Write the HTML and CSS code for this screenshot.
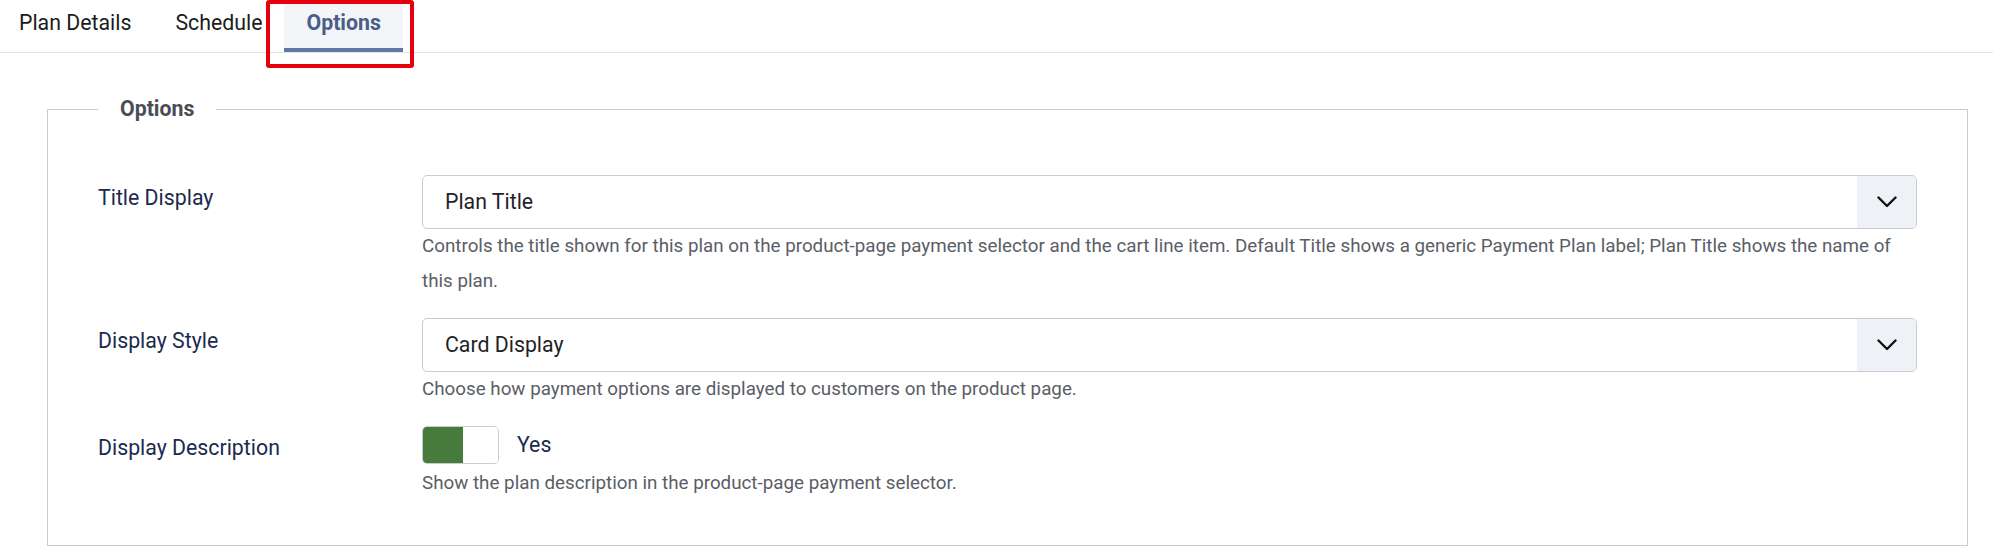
FILE: index.html
```html
<!DOCTYPE html>
<html lang="en">
<head>
<meta charset="utf-8">
<title>Payment Plan – Options</title>
<link rel="stylesheet" href="styles.css">
</head>
<body>
  <nav class="tabs">
    <div class="tablist">
      <button class="tab" type="button">Plan Details</button>
      <button class="tab" type="button">Schedule</button>
      <button class="tab tab-active" type="button">Options<span class="tab-marker"></span></button>
    </div>
  </nav>

  <fieldset class="panel">
    <legend class="panel-legend">Options</legend>

    <div class="field">
      <label class="field-label" for="title-display">Title Display</label>
      <div class="field-control">
        <div class="select">
          <span class="select-value" id="title-display">Plan Title</span>
          <span class="select-caret">
            <svg width="20" height="12" viewBox="0 0 20 12" aria-hidden="true"><path d="M1.5 1.5 L10 10 L18.5 1.5" fill="none" stroke="#111" stroke-width="2.4" stroke-linecap="round" stroke-linejoin="round"/></svg>
          </span>
        </div>
        <div class="help">Controls the title shown for this plan on the product-page payment selector and the cart line item. Default Title shows a generic Payment Plan label; Plan Title shows the name of this plan.</div>
      </div>
    </div>

    <div class="field">
      <label class="field-label" for="display-style">Display Style</label>
      <div class="field-control">
        <div class="select">
          <span class="select-value" id="display-style">Card Display</span>
          <span class="select-caret">
            <svg width="20" height="12" viewBox="0 0 20 12" aria-hidden="true"><path d="M1.5 1.5 L10 10 L18.5 1.5" fill="none" stroke="#111" stroke-width="2.4" stroke-linecap="round" stroke-linejoin="round"/></svg>
          </span>
        </div>
        <div class="help">Choose how payment options are displayed to customers on the product page.</div>
      </div>
    </div>

    <div class="field">
      <label class="field-label" for="display-description">Display Description</label>
      <div class="field-control">
        <div class="switch-row">
          <span class="switch" id="display-description"><span class="switch-on"></span><span class="switch-off"></span></span>
          <span class="switch-text">Yes</span>
        </div>
        <div class="help help-after-switch">Show the plan description in the product-page payment selector.</div>
      </div>
    </div>
  </fieldset>
</body>
</html>
```

FILE: styles.css
```css
* {
  box-sizing: border-box;
}

html, body {
  margin: 0;
  padding: 0;
  background: #ffffff;
}

body {
  font-family: Roboto, "Liberation Sans", Arial, sans-serif;
  font-size: 21.3px;
  line-height: 30px;
  color: #22262a;
}

/* ---- tab strip ---- */
.tabs {
  border-bottom: 1px solid #e1e3e7;
}

.tablist {
  display: flex;
  margin-left: -3px;
}

.tab {
  position: relative;
  font: inherit;
  color: #1c1c1c;
  background: transparent;
  border: 0;
  border-bottom: 4px solid transparent;
  padding: 8px 22px 10px;
  height: 52px;
  line-height: 30px;
  cursor: pointer;
}

.tab-active {
  color: #4a5e86;
  font-weight: 700;
  background: #f3f5f9;
  border-bottom-color: #5f78a2;
}

/* red outline drawn around the current tab */
.tab-marker {
  position: absolute;
  top: 0;
  left: -18px;
  right: -11px;
  bottom: -20px;
  border: 4px solid #e5000d;
  border-radius: 3px;
  pointer-events: none;
}

/* ---- options panel ---- */
.panel {
  margin: 41px 25px 0 47px;
  padding: 51px 50px 44px 50px;
  border: 1px solid #c9ccd5;
  min-width: 0;
}

.panel-legend {
  padding: 0 22px;
  font-weight: 700;
  color: #494e56;
  line-height: 30px;
}

.field {
  display: grid;
  grid-template-columns: 324px 1fr;
  margin-bottom: 18px;
}

.field:first-of-type {
  margin-bottom: 19px;
}

.field:last-child {
  margin-bottom: 0;
}

.field-label {
  padding-top: 8px;
  color: #1b2a4e;
}

.field-control {
  min-width: 0;
}

.select {
  display: flex;
  height: 54px;
  border: 1px solid #c9ccd5;
  border-radius: 5px;
  overflow: hidden;
  background: #ffffff;
}

.select-value {
  flex: 1;
  padding: 11px 22px;
  color: #1f2327;
}

.select-caret {
  width: 59px;
  display: flex;
  align-items: center;
  justify-content: center;
  background: #eef1f6;
}

.help {
  font-size: 18.8px;
  line-height: 35px;
  color: #5a5e66;
}

.help-after-switch {
  margin-top: 2px;
}

.switch-row {
  display: flex;
  align-items: center;
  gap: 18px;
  padding-top: 1px;
}

.switch {
  display: flex;
  width: 77px;
  height: 38px;
  border: 1px solid #c9ccd5;
  border-radius: 5px;
  overflow: hidden;
}

.switch-on {
  width: 40px;
  background: #467b3b;
}

.switch-off {
  flex: 1;
  background: #ffffff;
}

.switch-text {
  color: #1b2a4e;
}
```
